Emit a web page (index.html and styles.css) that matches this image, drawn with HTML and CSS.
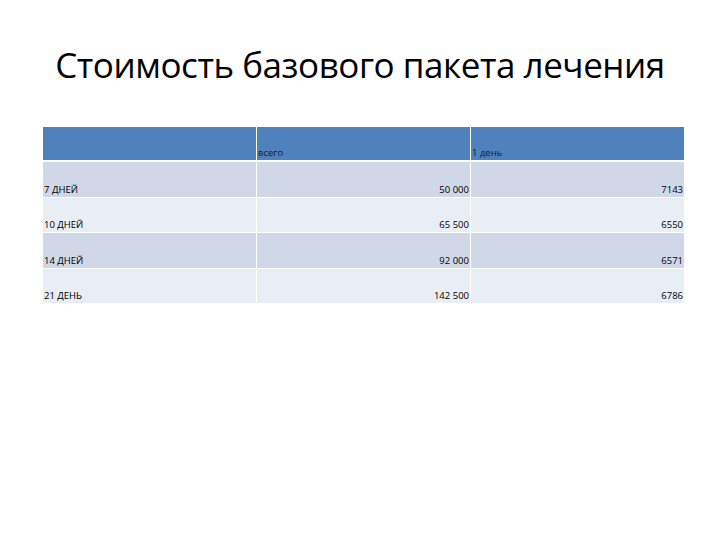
FILE: index.html
```html
<!DOCTYPE html>
<html lang="ru">
<head>
<meta charset="utf-8">
<link rel="stylesheet" href="styles.css">
</head>
<body>
<div class="slide">
  <h1 class="title">Стоимость базового пакета лечения</h1>
  <table class="price">
    <colgroup><col class="c1"><col class="c2"><col class="c3"></colgroup>
    <thead>
      <tr><th></th><th>всего</th><th>1 день</th></tr>
    </thead>
    <tbody>
      <tr class="odd"><td>7 ДНЕЙ</td><td class="num">50 000</td><td class="num">7143</td></tr>
      <tr class="even"><td>10 ДНЕЙ</td><td class="num">65 500</td><td class="num">6550</td></tr>
      <tr class="odd"><td>14 ДНЕЙ</td><td class="num">92 000</td><td class="num">6571</td></tr>
      <tr class="even"><td>21 ДЕНЬ</td><td class="num">142 500</td><td class="num">6786</td></tr>
    </tbody>
  </table>
</div>
</body>
</html>
```
FILE: styles.css
```css
html, body {
  margin: 0;
  padding: 0;
  background: #ffffff;
}
.slide {
  width: 720px;
  height: 540px;
  display: flex;
  flex-direction: column;
}
.title {
  margin: 41px 0 0 0;
  height: 85px;
  font-family: "Open Sans", "Noto Sans", sans-serif;
  font-weight: 400;
  font-size: 35px;
  line-height: 48px;
  text-align: center;
  color: #000;
  letter-spacing: -0.45px;
}
.price {
  margin-left: 42px;
  width: 642px;
  border-collapse: collapse;
  table-layout: fixed;
  font-family: "Open Sans", "Noto Sans", sans-serif;
  font-size: 9.5px;
  color: #000;
}
.c1 { width: 214px; }
.c2 { width: 214px; }
.c3 { width: 214px; }
.price th, .price td {
  border: 1px solid #ffffff;
  vertical-align: bottom;
  padding: 0 1px 1px 1px;
  line-height: 12px;
  font-weight: 400;
  text-align: left;
}
.price thead th {
  background: #4f81bd;
  height: 32px;
  border-bottom: 2px solid #ffffff;
  color: #1a1a2a;
}
.price tbody td {
  height: 33.5px;
}
.price tr.odd td { background: #d0d8e8; }
.price tr.even td { background: #e9edf4; }
.price td.num { text-align: right; }
```
